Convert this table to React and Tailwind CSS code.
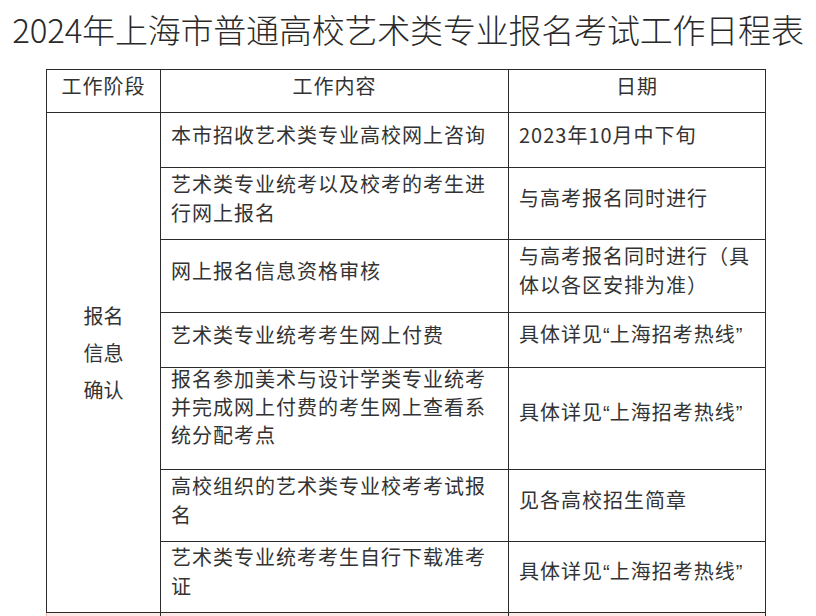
const Q = ({ children }) => (
  <span style={{ fontFamily: '"Liberation Sans", sans-serif' }} className="tracking-[0px]">
    {children}
  </span>
);

const hotline = (
  <>
    具体详见<Q>“</Q>上海招考热线<Q>”</Q>
  </>
);

const rows = [
  { h: "h-[55px]", content: ["本市招收艺术类专业高校网上咨询"], date: ["2023年10月中下旬"] },
  { h: "h-[72px]", content: ["艺术类专业统考以及校考的考生进", "行网上报名"], date: ["与高考报名同时进行"] },
  { h: "h-[73px]", content: ["网上报名信息资格审核"], date: ["与高考报名同时进行（具", "体以各区安排为准）"] },
  { h: "h-[55px]", content: ["艺术类专业统考考生网上付费"], date: [hotline] },
  {
    h: "h-[102px]",
    content: ["报名参加美术与设计学类专业统考", "并完成网上付费的考生网上查看系", "统分配考点"],
    date: [hotline],
    tight: true,
  },
  { h: "h-[72px]", content: ["高校组织的艺术类专业校考考试报", "名"], date: ["见各高校招生简章"] },
  { h: "h-[71px]", content: ["艺术类专业统考考生自行下载准考", "证"], date: [hotline] },
];

function Lines({ items }) {
  return items.map((t, i) => (
    <div key={i} className="whitespace-nowrap">
      {t}
    </div>
  ));
}

export default function App() {
  return (
    <div
      className="w-[816px] h-[616px] overflow-hidden bg-white text-[#333]"
      style={{ fontFamily: '"Noto Sans CJK SC", "Noto Sans", sans-serif' }}
    >
      {/* Title */}
      <h1 className="pt-[7px] text-center text-[33px] leading-[44px] font-light text-[#2a2a2a] tracking-[-0.2px]">
        2024年上海市普通高校艺术类专业报名考试工作日程表
      </h1>

      <table className="ml-[46px] mt-[18px] w-[719px] border-collapse table-fixed text-[20px] leading-[29px] tracking-[1px]">
        <colgroup>
          <col className="w-[114px]" />
          <col className="w-[348px]" />
          <col className="w-[257px]" />
        </colgroup>
        <thead>
          <tr className="h-[43px]">
            <th className="border border-[#2b2b2b] font-normal text-center align-middle pb-[11px]">
              工作阶段
            </th>
            <th className="border border-[#2b2b2b] font-normal text-center align-middle pb-[11px]">
              工作内容
            </th>
            <th className="border border-[#2b2b2b] font-normal text-center align-middle pb-[11px]">
              日期
            </th>
          </tr>
        </thead>
        <tbody>
          {rows.map((r, i) => (
            <tr key={i} className={r.h}>
              {i === 0 && (
                <td
                  rowSpan={7}
                  className="border border-[#2b2b2b] text-center align-middle pb-[20px] leading-[37px] tracking-[0px]"
                >
                  <div>报名</div>
                  <div>信息</div>
                  <div>确认</div>
                </td>
              )}
              <td
                className={`border border-[#2b2b2b] align-middle px-[10px] ${
                  r.tight ? "pb-[18px] leading-[28px]" : "pb-[12px]"
                }`}
              >
                <div className={r.tight ? "-mt-[6px]" : ""}>
                  <Lines items={r.content} />
                </div>
              </td>
              <td className="border border-[#2b2b2b] align-middle px-[10px] pb-[12px]">
                <Lines items={r.date} />
              </td>
            </tr>
          ))}
          <tr className="h-[60px] bg-[#fde9e7]">
            <td className="border border-[#2b2b2b] border-l-[#e8b4b0]"></td>
            <td className="border border-[#2b2b2b] align-top px-[10px] pt-[2px] text-[#555]">
              艺术类专业统考考试时间及考点
            </td>
            <td className="border border-[#2b2b2b] align-top px-[10px] pt-[2px]"></td>
          </tr>
        </tbody>
      </table>
    </div>
  );
}
